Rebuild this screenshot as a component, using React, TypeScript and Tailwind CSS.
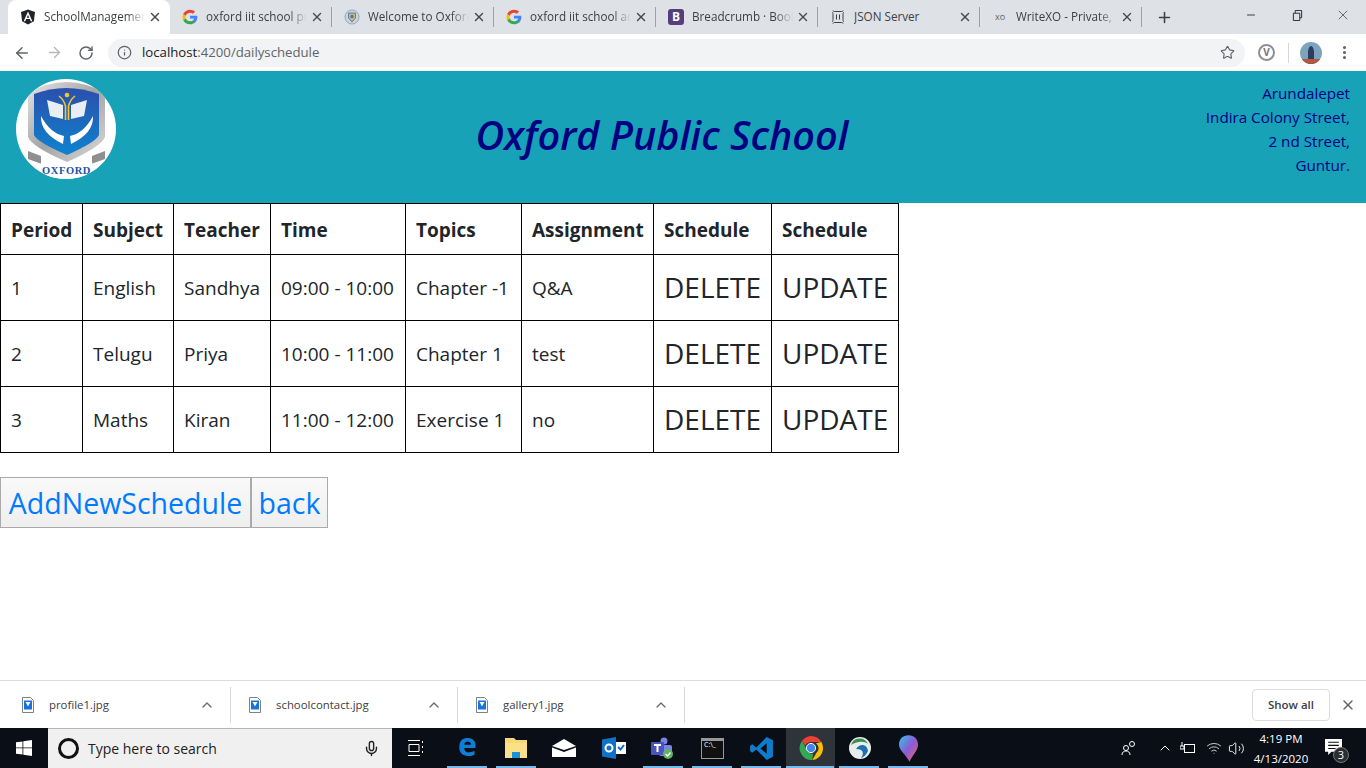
import { ArrowLeft, ArrowRight, ChevronUp, Info, Minus, MoreVertical, Plus, RotateCw, Star, X, Mic, Volume2, Wifi } from "lucide-react";
import type { ReactNode } from "react";

const FONT = "font-['Open_Sans','Noto_Sans',sans-serif]";

function GoogleG() {
  return (
    <svg viewBox="0 0 48 48" className="w-4 h-4 shrink-0">
      <path fill="#4285f4" d="M46 24.5c0-1.600-.1-3.100-.4-4.500H24v8.700h12.300c-.5 2.800-2.100 5.200-4.500 6.800v5.600h7.300C43.400 36.700 46 31.100 46 24.500z" />
      <path fill="#34a853" d="M24 46c6.100 0 11.200-2 15-5.500l-7.300-5.600c-2 1.400-4.600 2.200-7.700 2.200-5.900 0-10.900-4-12.700-9.300H3.800v5.800C7.500 40.900 15.200 46 24 46z" />
      <path fill="#fbbc05" d="M11.300 28.800c-.5-1.400-.7-2.900-.7-4.800s.3-3.300.7-4.800v-5.800H3.800C2.300 16.400 1.500 20.100 1.500 24s.8 7.600 2.300 10.600z" />
      <path fill="#ea4335" d="M24 10.900c3.300 0 6.300 1.100 8.700 3.400l6.500-6.500C35.200 4.100 30.100 2 24 2 15.200 2 7.500 7.100 3.800 14.400l7.500 5.800c1.800-5.300 6.800-9.300 12.700-9.300z" />
    </svg>
  );
}

function AngularIcon() {
  return (
    <svg viewBox="0 0 32 32" className="w-4 h-4 shrink-0">
      <path fill="#1f2329" d="M16 1 2 6l2.200 18.500L16 31l11.800-6.500L30 6z" />
      <path fill="#fff" d="M16 5 7.300 24.500h3.200l1.800-4.400h7.400l1.800 4.400h3.200zm0 7 2.500 5.500h-5z" />
    </svg>
  );
}

function CrestIcon() {
  return (
    <svg viewBox="0 0 16 16" className="w-4 h-4 shrink-0">
      <circle cx="8" cy="8" r="7" fill="#c8d6e4" stroke="#8ea7c4" />
      <path d="M4.500 4h7v5L8 13 4.500 9z" fill="#d5b75c" stroke="#5b7fb5" />
      <circle cx="8" cy="7.500" r="1.800" fill="#4d79b8" />
    </svg>
  );
}

function BootstrapIcon() {
  return (
    <div className="w-4 h-4 shrink-0 rounded-[3px] bg-[#563d7c] flex items-center justify-center text-white text-[12px] font-bold leading-none">
      B
    </div>
  );
}

function JsonIcon() {
  return (
    <svg viewBox="0 0 16 16" className="w-4 h-4 shrink-0" fill="none" stroke="#3c4043" strokeWidth="1">
      <path d="M3 1.500c0 1 1 1 2 1h6c1 0 2 0 2-1M3 14.500c0-1 1-1 2-1h6c1 0 2 0 2 1M2 3.500c1 0 1 1 1 2v5c0 1 0 2-1 2M14 3.500c-1 0-1 1-1 2v5c0 1 0 2 1 2M6.500 5.500v5M9.500 5.500v5" />
    </svg>
  );
}

const tabs: { title: string; icon: ReactNode; active?: boolean; sep?: boolean; fade?: boolean }[] = [
  { title: "SchoolManagement", icon: <AngularIcon />, active: true, fade: true },
  { title: "oxford iit school pri", icon: <GoogleG />, sep: true, fade: true },
  { title: "Welcome to Oxford", icon: <CrestIcon />, sep: true, fade: true },
  { title: "oxford iit school ad", icon: <GoogleG />, sep: true, fade: true },
  { title: "Breadcrumb · Bootstr", icon: <BootstrapIcon />, sep: true, fade: true },
  { title: "JSON Server", icon: <JsonIcon />, sep: true },
  { title: "WriteXO - Private,", icon: <span className="w-4 shrink-0 text-[9px] text-[#5f6368] text-center">xo</span>, sep: true, fade: true },
];

function Tab({ title, icon, active, sep, fade }: (typeof tabs)[number]) {
  return (
    <div className={`w-[162px] h-[34px] shrink-0 flex items-center pl-[12px] ${active ? "bg-white rounded-t-[8px]" : ""}`}>
      {icon}
      <span
        className={`ml-[8px] flex-1 min-w-0 overflow-hidden whitespace-nowrap text-[11.7px] text-[#3c4043] ${
          fade ? "[mask-image:linear-gradient(to_right,black_82%,transparent)]" : ""
        }`}
      >
        {title}
      </span>
      <X size={14} strokeWidth={2.4} className="text-[#45484c] shrink-0 ml-[3px]" />
      <div className={`ml-[7px] w-px h-[20px] shrink-0 ${sep ? "bg-[#9da1a6]" : ""}`} />
    </div>
  );
}

function TabStrip() {
  return (
    <div className="h-[34px] bg-[#dee1e6] flex pl-[8px] shrink-0">
      {tabs.map((t) => (
        <Tab key={t.title} {...t} />
      ))}
      <div className="w-[44px] flex items-center justify-center">
        <Plus size={17} strokeWidth={2.2} className="text-[#3c4043]" />
      </div>
      <div className="ml-auto flex items-start text-[#3c4043]">
        <div className="w-[46px] h-[30px] flex items-center justify-center">
          <Minus size={12} />
        </div>
        <div className="w-[46px] h-[30px] flex items-center justify-center">
          <svg viewBox="0 0 12 12" className="w-[11px] h-[11px]" fill="none" stroke="#1f2329">
            <path d="M1.500 3.500h7v8h-7zM3.500 3.500v-3h7v8h-2" />
          </svg>
        </div>
        <div className="w-[46px] h-[30px] flex items-center justify-center">
          <X size={16} strokeWidth={1.1} />
        </div>
      </div>
    </div>
  );
}

function Toolbar() {
  return (
    <div className="h-[37px] bg-white flex items-center shrink-0 pl-[13px] pr-[13px]">
      <ArrowLeft size={18} strokeWidth={2} className="text-[#5f6368]" />
      <ArrowRight size={17} strokeWidth={2} className="text-[#b6b8bb] ml-[15px]" />
      <RotateCw size={16} strokeWidth={2.2} className="text-[#5f6368] ml-[15px]" />
      <div className="ml-[14px] w-[1137px] h-[28px] rounded-full bg-[#f1f3f4] flex items-center pl-[9px] pr-[10px]">
        <Info size={15} strokeWidth={2} className="text-[#5f6368]" />
        <span className="ml-[10px] text-[13.2px] text-[#5f6368]">
          <span className="text-[#202124]">localhost</span>:4200/dailyschedule
        </span>
        <Star size={15} strokeWidth={1.8} className="ml-auto text-[#5f6368]" />
      </div>
      <div className="ml-[13px] w-[17px] h-[17px] rounded-full border-2 border-[#8b8f93] flex items-center justify-center text-[10px] font-bold text-[#777]">
        V
      </div>
      <div className="ml-[13px] w-px h-[20px] bg-[#d5d7da]" />
      <svg viewBox="0 0 22 22" className="ml-[11px] w-[22px] h-[22px]">
        <defs>
          <clipPath id="av">
            <circle cx="11" cy="11" r="11" />
          </clipPath>
        </defs>
        <g clipPath="url(#av)">
          <rect width="22" height="22" fill="#7fa3bf" />
          <path d="M8 22V10c0-3 1.500-6 3-6s3 3 3 6v12z" fill="#2a3f5f" />
          <rect y="17" width="22" height="5" fill="#b5583f" />
        </g>
      </svg>
      <MoreVertical size={17} strokeWidth={2.4} className="ml-[14px] text-[#5f6368]" />
    </div>
  );
}

function Logo() {
  return (
    <svg viewBox="0 0 100 100" className="w-[100px] h-[100px] shrink-0">
      <defs>
        <clipPath id="logoClip">
          <circle cx="50" cy="50" r="50" />
        </clipPath>
        <linearGradient id="silver" x1="0" y1="0" x2="1" y2="1">
          <stop offset="0" stopColor="#e6e6e6" />
          <stop offset="0.5" stopColor="#a4a4a4" />
          <stop offset="1" stopColor="#dcdcdc" />
        </linearGradient>
        <linearGradient id="blue" x1="0" y1="0" x2="0" y2="1">
          <stop offset="0" stopColor="#2a50ad" />
          <stop offset="1" stopColor="#0f82cf" />
        </linearGradient>
      </defs>
      <circle cx="50" cy="50" r="50" fill="#fff" />
      <g clipPath="url(#logoClip)">
        <path d="M12 14Q50-8 89 14V58Q85 68 51 83 16 68 12 58z" fill="url(#silver)" />
        <path d="M18 15Q50 3 83 15V56Q80 63 51 76 21 63 18 56z" fill="url(#blue)" />
        <path d="M31 21l16 5v14l-13-3zM71 21l-16 5v14l13-3z" fill="#e9edf4" />
        <path d="M43 17q5 4 6.500 10v14M59 17q-5 4-6.500 10v14" fill="none" stroke="#f3c42c" strokeWidth="1.600" />
        <circle cx="51" cy="16" r="2.300" fill="#f3c42c" />
        <path d="M25 37q-1 17 22 28l1-8Q34 54 25 37zM77 37q1 17-22 28l-1-8q14-3 23-20z" fill="#fff" />
        <path d="M12 72l13 5v9l-13-5zM89 72l-13 5v9l13-5z" fill="#8f8f8f" />
        <path d="M12 80Q50 96 89 80v22H12z" fill="#fff" />
        <text x="50.500" y="95" textAnchor="middle" fontSize="10.500" fontWeight="700" fill="#2550a5" fontFamily="'Liberation Serif',serif" letterSpacing="0.6">
          OXFORD
        </text>
      </g>
    </svg>
  );
}

function Header() {
  return (
    <header className="h-[132px] bg-[#17a2b8] flex items-start pt-[8px] pl-[16px] pr-[16px] shrink-0 text-[#000080]">
      <Logo />
      <h1 className="flex-1 mt-[36px] pl-[2px] text-center text-[39.5px] font-semibold italic leading-[40px]">Oxford Public School</h1>
      <address className="not-italic mt-[2px] text-right text-[15.2px] leading-[24px]">
        Arundalepet
        <br />
        Indira Colony Street,
        <br />
        2 nd Street,
        <br />
        Guntur.
      </address>
    </header>
  );
}

const headers = ["Period", "Subject", "Teacher", "Time", "Topics", "Assignment", "Schedule", "Schedule"];
const colWidths = ["w-[82px]", "w-[91px]", "w-[97px]", "w-[135px]", "w-[116px]", "w-[132px]", "w-[118px]", "w-[127px]"];
const rows = [
  ["1", "English", "Sandhya", "09:00 - 10:00", "Chapter -1", "Q&A"],
  ["2", "Telugu", "Priya", "10:00 - 11:00", "Chapter 1", "test"],
  ["3", "Maths", "Kiran", "11:00 - 12:00", "Exercise 1", "no"],
];

function ScheduleTable() {
  return (
    <table className="border-collapse table-fixed w-[899px] text-[#212529] text-[19px]">
      <colgroup>
        {colWidths.map((w, i) => (
          <col key={i} className={w} />
        ))}
      </colgroup>
      <thead>
        <tr className="h-[51px]">
          {headers.map((h, i) => (
            <th key={i} className="border border-black px-[10px] pt-[2px] text-left font-bold whitespace-nowrap">
              {h}
            </th>
          ))}
        </tr>
      </thead>
      <tbody>
        {rows.map((r) => (
          <tr key={r[0]} className="h-[66px]">
            {r.map((c, i) => (
              <td key={i} className="border border-black px-[10px] pt-[2px] whitespace-nowrap">
                {c}
              </td>
            ))}
            <td className="border border-black px-[10px] pb-[1px] text-[28px] whitespace-nowrap">DELETE</td>
            <td className="border border-black px-[10px] pb-[1px] text-[28px] whitespace-nowrap">UPDATE</td>
          </tr>
        ))}
      </tbody>
    </table>
  );
}

const downloads = ["profile1.jpg", "schoolcontact.jpg", "gallery1.jpg"];

function FileIcon() {
  return (
    <svg viewBox="0 0 12 16" className="w-[12px] h-[16px] shrink-0">
      <path d="M.5.500h8l3 3v12H.5z" fill="#fff" stroke="#7b8187" />
      <rect x="2" y="3.500" width="8" height="9" fill="#1a73d8" />
      <path d="M3.500 5h5L7 7.500 6 9.500 5 7.500z" fill="#fff" />
    </svg>
  );
}

function DownloadBar() {
  return (
    <div className="h-[48px] border-t border-[#dadce0] bg-white flex items-center shrink-0 pl-[4px]">
      {downloads.map((d) => (
        <div key={d} className="w-[227px] h-[36px] border-r border-[#d5d7da] flex items-center pl-[18px] pr-[15px]">
          <FileIcon />
          <span className="ml-[15px] text-[11.4px] text-[#3c4043] flex-1">{d}</span>
          <ChevronUp size={16} strokeWidth={2} className="text-[#6a6d70]" />
        </div>
      ))}
      <button className="ml-auto w-[78px] h-[32px] rounded-[4px] border border-[#dadce0] text-[11.5px] font-semibold text-[#3c4043]">
        Show all
      </button>
      <X size={16} strokeWidth={2} className="mx-[10px] text-[#5f6368]" />
    </div>
  );
}

function TaskIcon({ children, running, active }: { children: ReactNode; running?: boolean; active?: boolean }) {
  return (
    <div className={`w-[49px] h-[40px] flex items-center justify-center relative shrink-0 ${active ? "bg-[#2f343b]" : ""}`}>
      {children}
      {running && <div className={`absolute bottom-0 h-[2px] bg-[#76b9ed] ${active ? "left-0 right-[1px]" : "left-[4px] right-[5px]"}`} />}
    </div>
  );
}

function Taskbar() {
  return (
    <div className="h-[40px] bg-[#0a0e16] flex items-center text-white shrink-0 font-['Open_Sans',sans-serif]">
      <div className="w-[48px] flex justify-center">
        <svg viewBox="0 0 16 16" className="w-[16px] h-[16px]" fill="#fff">
          <path d="M0 2.300 6.500 1.400V7.500H0zM7.300 1.300 16 0V7.500H7.300zM0 8.300H6.500V14.600L0 13.700zM7.300 8.300H16V16L7.300 14.700z" />
        </svg>
      </div>
      <div className="w-[344px] h-[40px] bg-[#f0f0f0] border-t border-[#b5b5b5] flex items-center pl-[10px] pr-[12px]">
        <div className="w-[21px] h-[21px] rounded-full border-[3px] border-[#111]" />
        <span className="ml-[9px] text-[14px] text-[#222] flex-1">Type here to search</span>
        <Mic size={17} className="text-[#222]" />
      </div>
      <div className="flex pl-[2px] items-center">
        <TaskIcon>
          <svg viewBox="0 0 16 16" className="w-[16px] h-[16px] -ml-[6px]" fill="none" stroke="#fff">
            <path d="M0 .500h12M0 15.500h12M1 4.500h10v7H1zM14.500 1v2M14.500 6v2M14.500 11v2" />
          </svg>
        </TaskIcon>
        <TaskIcon running>
          <span className="text-[#0f7ed6] text-[32px] font-bold leading-none -mt-[8px]">e</span>
        </TaskIcon>
        <TaskIcon running>
          <svg viewBox="0 0 22 20" className="w-[22px] h-[20px] -ml-[2px]">
            <path d="M0 0h9l2 2h11v18H0z" fill="#f8d775" />
            <path d="M0 5h22v15H0z" fill="#fbe08a" />
            <path d="M7 20v-6h8v6z" fill="#1f8fd6" />
          </svg>
        </TaskIcon>
        <TaskIcon>
          <svg viewBox="0 0 24 18" className="w-[24px] h-[18px] -ml-[4px]" fill="#fff">
            <path d="M12 0 24 7 12 11 0 7zM0 8.500 12 13l12-4.500V18H0z" />
          </svg>
        </TaskIcon>
        <TaskIcon>
          <svg viewBox="0 0 24 22" className="w-[24px] h-[22px] -ml-[2px]">
            <path d="M14 0v22L0 19.500v-17z" fill="#0f72c6" />
            <rect x="14" y="5" width="10" height="12" fill="#fff" />
            <circle cx="7" cy="11" r="3.500" fill="none" stroke="#fff" strokeWidth="2" />
            <path d="M16 10l2.500 2.500L22 8" fill="none" stroke="#0f72c6" strokeWidth="2" />
          </svg>
        </TaskIcon>
        <TaskIcon running>
          <svg viewBox="0 0 24 24" className="w-[24px] h-[24px] -ml-[3px]">
            <circle cx="14" cy="5" r="3.500" fill="#7b83eb" />
            <rect x="9" y="9" width="13" height="11" rx="2" fill="#7b83eb" />
            <rect x="1" y="6" width="13" height="13" rx="1" fill="#4b53bc" />
            <path d="M4 9h7M7.500 9v7" stroke="#fff" strokeWidth="2" />
            <circle cx="18" cy="18" r="5" fill="#5fb35f" />
            <path d="M15.500 18l2 2 3-3.500" stroke="#fff" strokeWidth="1.300" fill="none" />
          </svg>
        </TaskIcon>
        <TaskIcon running>
          <div className="w-[23px] h-[21px] bg-[#111] border border-[#999] border-t-[3px] text-[7px] leading-[8px] pl-[2px]">C:\_</div>
        </TaskIcon>
        <TaskIcon running>
          <svg viewBox="0 0 24 24" className="w-[25px] h-[25px]">
            <path d="M17 1 7 11 3 8 1 9.500v5L3 16l4-3 10 10 6-3V4z" fill="#0e7ccb" />
            <path d="M17 7l-6 5 6 5z" fill="#0a0e16" />
          </svg>
        </TaskIcon>
        <TaskIcon running active>
          <svg viewBox="0 0 24 24" className="w-[24px] h-[24px]">
            <path d="M12 0a12 12 0 0 1 10.400 6H12a6 6 0 0 0-5.600 3.700L2.900 5A12 12 0 0 1 12 0z" fill="#ea4335" />
            <path d="M22.400 6a12 12 0 0 1-9 18l4.200-7.400A6 6 0 0 0 17 7.200z" fill="#fbbc05" />
            <path d="M13.400 24A12 12 0 0 1 2.900 5l5 8.700a6 6 0 0 0 6.100 4z" fill="#34a853" />
            <circle cx="12" cy="12" r="4.600" fill="#4285f4" stroke="#fff" strokeWidth="1" />
          </svg>
        </TaskIcon>
        <TaskIcon running>
          <svg viewBox="0 0 24 24" className="w-[24px] h-[24px]">
            <circle cx="12" cy="12" r="11" fill="#e8efe8" />
            <path d="M3 9a9 9 0 0 1 17-1c-4-3-10-3-17 1z" fill="#3f8d55" />
            <path d="M8 13c4-6 11-5 12 2-2 4-4 6-7 7 3-4 3-9-5-9z" fill="#1f6fb5" />
          </svg>
        </TaskIcon>
        <TaskIcon running>
          <svg viewBox="0 0 20 28" className="w-[19px] h-[27px]">
            <defs>
              <linearGradient id="pin" x1="0" y1="0" x2="1" y2="1">
                <stop offset="0" stopColor="#35c5e8" />
                <stop offset="0.5" stopColor="#8a5bd6" />
                <stop offset="1" stopColor="#f0616a" />
              </linearGradient>
            </defs>
            <path d="M10 0c6 0 10 4 10 10 0 6-6 11-9 18C8 21 0 16 0 10 0 4 4 0 10 0z" fill="url(#pin)" />
          </svg>
        </TaskIcon>
      </div>
      <div className="ml-auto flex items-center h-full">
        <svg viewBox="0 0 16 16" className="w-[16px] h-[16px] mr-[20px]" fill="none" stroke="#fff">
          <circle cx="5" cy="8" r="2.500" />
          <circle cx="11" cy="4" r="2.500" />
          <path d="M1 15c0-3 2-4 4-4s4 1 4 4" />
        </svg>
        <ChevronUp size={16} strokeWidth={1.500} className="mr-[7px]" />
        <svg viewBox="0 0 16 14" className="w-[16px] h-[14px] mr-[10px]" fill="none" stroke="#fff">
          <rect x="4.500" y="3.500" width="10" height="8" />
          <path d="M2 1v4M0 5h4v3H0z" />
        </svg>
        <Wifi size={16} strokeWidth={1.500} className="mr-[6px] text-[#c9c9c9]" />
        <Volume2 size={17} strokeWidth={1.300} />
        <div className="w-[72px] text-center text-[11.5px] leading-[20px] mt-[1px]">
          <div>4:19 PM</div>
          <div>4/13/2020</div>
        </div>
        <div className="relative w-[48px] h-full flex items-center pl-[7px] ml-[1px]">
          <svg viewBox="0 0 16 16" className="w-[17px] h-[17px] -mt-[2px]" fill="#fff">
            <path d="M0 0h16v12H6l-3 3v-3H0z" />
            <path d="M3 3h10M3 6h10M3 9h7" stroke="#0a0e16" />
          </svg>
          <div className="absolute right-[17px] bottom-[5px] w-[16px] h-[16px] rounded-full bg-[#2a2d31] border border-[#777] text-[11px] leading-[14px] text-center">3</div>
        </div>
      </div>
    </div>
  );
}

export default function App() {
  return (
    <div className={`h-[768px] w-[1366px] overflow-hidden flex flex-col bg-white ${FONT}`}>
      <TabStrip />
      <Toolbar />
      <Header />
      <main className="flex-1 min-h-0">
        <ScheduleTable />
        <div className="flex mt-[24px]">
          <button className="h-[51px] w-[251px] pt-[2px] border border-[#aaa] bg-gradient-to-b from-[#f9f9f9] to-[#efefef] text-[#007bff] text-[28.5px] leading-none">AddNewSchedule</button>
          <button className="h-[51px] w-[77px] pt-[2px] border border-[#aaa] bg-gradient-to-b from-[#f9f9f9] to-[#efefef] text-[#007bff] text-[28.5px] leading-none">back</button>
        </div>
      </main>
      <DownloadBar />
      <Taskbar />
    </div>
  );
}
